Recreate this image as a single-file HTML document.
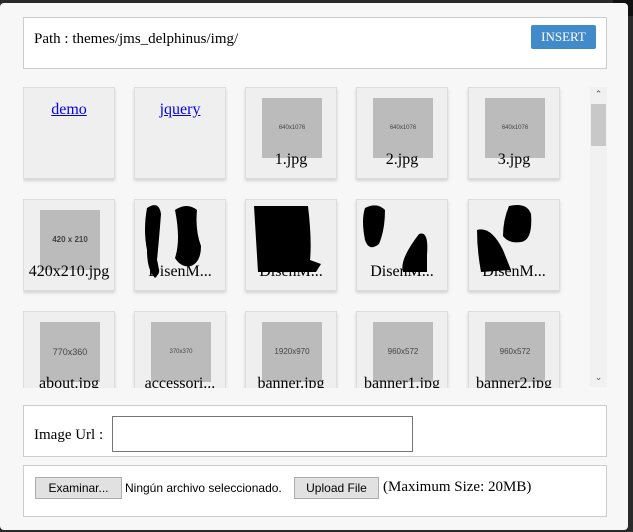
<!DOCTYPE html>
<html><head><style>
*{box-sizing:border-box;margin:0;padding:0}
body{width:633px;height:532px;background:#2a2a2a;position:relative;overflow:hidden;font-family:"Liberation Serif",serif}
.dlg{position:absolute;left:0;top:3px;width:628px;height:527px;background:#f7f7f7;border-radius:4px}
.box{position:absolute;left:23px;width:584px;background:#fff;border:1px solid #ccc}
.ins{position:absolute;left:531px;top:25px;width:65px;height:24px;background:#428bca;color:#fff;font-size:13px;line-height:24px;text-align:center;border-radius:2px}
.tile{position:absolute;width:92px;height:92px;background:#efefef;border:1px solid #ddd;box-shadow:0 2px 3px rgba(0,0,0,.15);text-align:center;font-size:16px;overflow:hidden}
.tile a{color:#00e;text-decoration:underline;display:block;margin-top:13px}
.im{position:absolute;left:16px;top:10px;width:60px;height:60px;background:#bbb;font-family:"Liberation Sans",sans-serif;font-size:6px;color:#444;line-height:60px}
.lb{position:absolute;left:0;right:0;top:63px}
.btn{position:absolute;background:#e1e1e1;border:1px solid #adadad;font-family:"Liberation Sans",sans-serif;font-size:12px;text-align:center;line-height:20px;height:22px}
</style></head><body>
<div style="position:absolute;right:0;top:0;width:20px;height:16px;background:#111;border-radius:0 0 0 10px"></div>
<div class="dlg"></div>
<div class="box" style="top:17px;height:52px"><div style="position:absolute;left:10px;top:13px;font-size:15px">Path : themes/jms_delphinus/img/</div></div>
<div class="ins">INSERT</div>
<div style="position:absolute;left:23px;top:84px;width:584px;height:304px;overflow:hidden">
<div class="tile" style="left:0;top:3px"><a>demo</a></div>
<div class="tile" style="left:111px;top:3px"><a>jquery</a></div>
<div class="tile" style="left:222px;top:3px"><div class="im">640x1076</div><div class="lb">1.jpg</div></div>
<div class="tile" style="left:333px;top:3px"><div class="im">640x1076</div><div class="lb">2.jpg</div></div>
<div class="tile" style="left:445px;top:3px"><div class="im">640x1076</div><div class="lb">3.jpg</div></div>
<div class="tile" style="left:0;top:115px"><div class="im" style="font-size:8px;font-weight:bold">420 x 210</div><div class="lb">420x210.jpg</div></div>
<div class="tile" style="left:111px;top:115px"><div class="lb">DisenM...</div><svg style="position:absolute;left:0;top:0" width="92" height="92"><path d="M12 8 Q24 0 26 14 Q24 40 22 60 Q26 74 20 78 Q12 70 12 50 Q8 30 12 8Z" fill="#000"/><path d="M40 10 Q52 2 62 10 Q60 30 66 46 Q66 62 56 66 Q46 68 40 58 Q46 40 40 10Z" fill="#000"/></svg></div>
<div class="tile" style="left:222px;top:115px"><div class="lb">DisenM...</div><svg style="position:absolute;left:0;top:0" width="92" height="92"><path d="M8 6 L62 6 Q66 40 64 60 L75 64 L70 72 L12 72 Z" fill="#000"/></svg></div>
<div class="tile" style="left:333px;top:115px"><div class="lb">DisenM...</div><svg style="position:absolute;left:0;top:0" width="92" height="92"><path d="M8 8 Q20 2 28 10 Q28 30 22 44 Q12 52 8 40 Q4 20 8 8Z" fill="#000"/><path d="M62 34 Q72 30 70 55 L70 72 L46 72 Q42 60 62 34Z" fill="#000"/></svg></div>
<div class="tile" style="left:445px;top:115px"><div class="lb">DisenM...</div><svg style="position:absolute;left:0;top:0" width="92" height="92"><path d="M40 6 Q58 2 62 14 Q64 40 52 42 Q40 44 34 36 Q34 20 40 6Z" fill="#000"/><path d="M8 30 Q22 26 34 50 L42 70 L12 72 Q8 50 8 30Z" fill="#000"/></svg></div>
<div class="tile" style="left:0;top:227px"><div class="im" style="font-size:9px">770x360</div><div class="lb">about.jpg</div></div>
<div class="tile" style="left:111px;top:227px"><div class="im">370x370</div><div class="lb">accessori...</div></div>
<div class="tile" style="left:222px;top:227px"><div class="im" style="font-size:8px">1920x970</div><div class="lb">banner.jpg</div></div>
<div class="tile" style="left:333px;top:227px"><div class="im" style="font-size:8px">960x572</div><div class="lb">banner1.jpg</div></div>
<div class="tile" style="left:445px;top:227px"><div class="im" style="font-size:8px">960x572</div><div class="lb">banner2.jpg</div></div>
<div style="position:absolute;left:567px;top:3px;width:17px;height:300px;background:#f1f1f1"><div style="position:absolute;top:17px;left:1px;width:15px;height:42px;background:#c8c8c8"></div><div style="position:absolute;top:2px;width:17px;text-align:center;font-size:9px;color:#555;font-family:'Liberation Sans'">&#8963;</div><div style="position:absolute;bottom:4px;width:17px;text-align:center;font-size:9px;color:#555;font-family:'Liberation Sans'">&#8964;</div></div>
</div>
<div class="box" style="top:405px;height:52px"><div style="position:absolute;left:10px;top:21px;font-size:15px">Image Url :</div><div style="position:absolute;left:88px;top:10px;width:301px;height:36px;border:1px solid #767676"></div></div>
<div class="box" style="top:465px;height:52px">
<div class="btn" style="left:11px;top:11px;width:87px">Examinar...</div>
<div style="position:absolute;left:101px;top:15px;font-family:'Liberation Sans',sans-serif;font-size:12px">Ningún archivo seleccionado.</div>
<div class="btn" style="left:270px;top:11px;width:85px">Upload File</div>
<div style="position:absolute;left:359px;top:13px;font-size:15px">(Maximum Size: 20MB)</div>
</div>
</body></html>
